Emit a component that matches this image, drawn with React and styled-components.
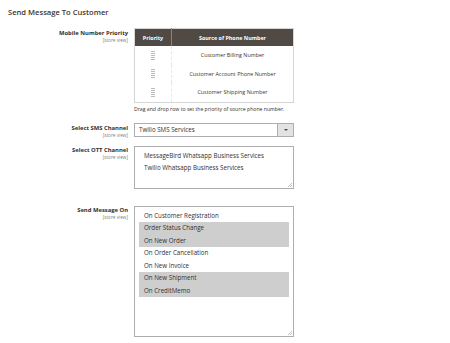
import React from "react";
import styled, { createGlobalStyle } from "styled-components";

const Global = createGlobalStyle`
  html, body { margin: 0; padding: 0; background: #fff; }
  body { font-family: "Open Sans", "Liberation Sans", sans-serif; color: #303030; }
`;

const Page = styled.div`
  width: 450px;
  height: 343px;
  box-sizing: border-box;
  padding: 6px 8px 0 8px;
  overflow: hidden;
`;

const Title = styled.h2`
  margin: 0 0 10px 0;
  font-size: 7.6px;
  font-weight: 600;
  color: #41362f;
  line-height: 12px;
`;

const Form = styled.div`
  display: grid;
  grid-template-columns: 120px 160px;
  column-gap: 6px;
  align-items: start;
`;

const LabelCell = styled.div`
  text-align: right;
  margin-top: ${(p) => p.$mt || 0}px;
`;

const LabelText = styled.div`
  font-size: 5.85px;
  font-weight: 700;
  color: #303030;
  line-height: 8px;
`;

const Scope = styled.div`
  font-size: 4.7px;
  color: #808080;
  line-height: 6px;
`;

const Control = styled.div`
  margin-top: ${(p) => p.$mt || 0}px;
`;

const Table = styled.table`
  width: 160px;
  border-collapse: collapse;
  border: 1px solid #d6d6d6;
  font-size: 5.4px;
  color: #303030;
`;

const Th = styled.th`
  background: #514943;
  color: #fff;
  font-weight: 700;
  height: 17px;
  padding: 0;
  text-align: center;
  border-left: ${(p) => (p.$first ? "none" : "1px solid #8a837f")};
  width: ${(p) => (p.$first ? "36px" : "auto")};
`;

const Td = styled.td`
  height: 18.5px;
  padding: 0;
  text-align: center;
  border-left: ${(p) => (p.$first ? "none" : "1px dashed #e6e6e6")};
  color: #41362f;
`;

const HandleSvg = styled.svg`
  display: inline-block;
  vertical-align: middle;
`;

const Handle = () => (
  <HandleSvg width="4" height="9" viewBox="0 0 4 9">
    {[0, 2, 4, 6, 8].map((y) => (
      <g key={y} fill="#777">
        <rect x="0.5" y={y} width="1" height="1" />
        <rect x="2.5" y={y} width="1" height="1" />
      </g>
    ))}
  </HandleSvg>
);

const Note = styled.div`
  font-size: 5.15px;
  color: #303030;
  margin-top: 3px;
  line-height: 7px;
`;

const SelectBox = styled.div`
  width: 160px;
  height: 14px;
  box-sizing: border-box;
  border: 1px solid #adadad;
  display: flex;
  align-items: center;
  font-size: 6.2px;
  color: #303030;
`;

const SelectValue = styled.div`
  flex: 1;
  padding-left: 4px;
`;

const ArrowBtn = styled.div`
  width: 15px;
  height: 100%;
  background: #e3e3e3;
  border-left: 1px solid #adadad;
  display: flex;
  align-items: center;
  justify-content: center;
  &::after {
    content: "";
    border-left: 2px solid transparent;
    border-right: 2px solid transparent;
    border-top: 2.5px solid #514943;
  }
`;

const MultiBox = styled.div`
  position: relative;
  width: 160px;
  height: ${(p) => p.$h}px;
  box-sizing: border-box;
  border: 1px solid #adadad;
  padding: ${(p) => p.$pt}px 4px 0 4px;
  font-size: 6.2px;
  color: #303030;
`;

const Option = styled.div`
  height: ${(p) => p.$h}px;
  line-height: ${(p) => p.$h}px;
  padding-left: 5px;
  white-space: nowrap;
  background: ${(p) => (p.$sel ? "#cecece" : "transparent")};
`;

const Grip = styled.svg`
  position: absolute;
  right: 1px;
  bottom: 1px;
`;

const GripIcon = () => (
  <Grip width="5" height="5" viewBox="0 0 5 5">
    <line x1="1" y1="5" x2="5" y2="1" stroke="#999" strokeWidth="0.6" />
    <line x1="3" y1="5" x2="5" y2="3" stroke="#999" strokeWidth="0.6" />
  </Grip>
);

const rows = [
  "Customer Billing Number",
  "Customer Account Phone Number",
  "Customer Shipping Number",
];

const events = [
  ["On Customer Registration", false],
  ["Order Status Change", true],
  ["On New Order", true],
  ["On Order Cancellation", false],
  ["On New Invoice", false],
  ["On New Shipment", true],
  ["On CreditMemo", true],
];

export default function App() {
  return (
    <Page>
      <Global />
      <Title>Send Message To Customer</Title>
      <Form>
        <LabelCell $mt={1}>
          <LabelText>Mobile Number Priority</LabelText>
          <Scope>[store view]</Scope>
        </LabelCell>
        <Control>
          <Table>
            <thead>
              <tr>
                <Th $first>Priority</Th>
                <Th>Source of Phone Number</Th>
              </tr>
            </thead>
            <tbody>
              {rows.map((r) => (
                <tr key={r}>
                  <Td $first>
                    <Handle />
                  </Td>
                  <Td>{r}</Td>
                </tr>
              ))}
            </tbody>
          </Table>
          <Note>Drag and drop row to set the priority of source phone number.</Note>
        </Control>

        <LabelCell $mt={11}>
          <LabelText>Select SMS Channel</LabelText>
          <Scope>[store view]</Scope>
        </LabelCell>
        <Control $mt={10}>
          <SelectBox>
            <SelectValue>Twilio SMS Services</SelectValue>
            <ArrowBtn />
          </SelectBox>
        </Control>

        <LabelCell $mt={8}>
          <LabelText>Select OTT Channel</LabelText>
          <Scope>[store view]</Scope>
        </LabelCell>
        <Control $mt={8}>
          <MultiBox $h={43} $pt={3}>
            <Option $h={12}>MessageBird Whatsapp Business Services</Option>
            <Option $h={12}>Twilio Whatsapp Business Services</Option>
            <GripIcon />
          </MultiBox>
        </Control>

        <LabelCell $mt={17}>
          <LabelText>Send Message On</LabelText>
          <Scope>[store view]</Scope>
        </LabelCell>
        <Control $mt={17}>
          <MultiBox $h={131} $pt={3}>
            {events.map(([t, s]) => (
              <Option key={t} $h={12.5} $sel={s}>
                {t}
              </Option>
            ))}
            <GripIcon />
          </MultiBox>
        </Control>
      </Form>
    </Page>
  );
}
